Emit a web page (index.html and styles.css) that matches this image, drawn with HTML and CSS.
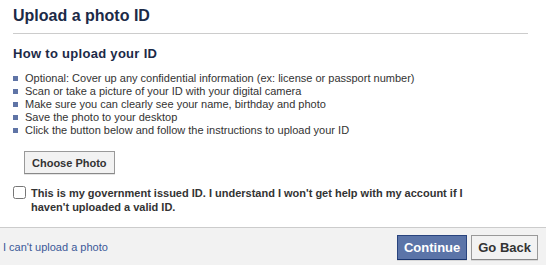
FILE: index.html
```html
<!DOCTYPE html>
<html lang="en">
<head>
    <meta charset="UTF-8">
    <title>Upload a photo ID</title>
    <link rel="stylesheet" href="styles.css">
</head>
<body>
    <div class="dialog">
        <div class="dialog-body">
            <h1 class="dialog-title">Upload a photo ID</h1>
            <h2 class="section-title">How to upload your ID</h2>
            <ul class="steps">
                <li>Optional: Cover up any confidential information (ex: license or passport number)</li>
                <li>Scan or take a picture of your ID with your digital camera</li>
                <li>Make sure you can clearly see your name, birthday and photo</li>
                <li>Save the photo to your desktop</li>
                <li>Click the button below and follow the instructions to upload your ID</li>
            </ul>
            <button type="button" class="btn choose-btn">Choose Photo</button>
            <label class="confirm">
                <input type="checkbox" class="confirm-box">
                <span>This is my government issued ID. I understand I won't get help with my account if I haven't uploaded a valid ID.</span>
            </label>
        </div>
        <!-- footer -->
        <div class="dialog-footer">
            <a href="#" class="footer-link">I can't upload a photo</a>
            <div class="footer-buttons">
                <button type="button" class="btn btn-primary">Continue</button>
                <button type="button" class="btn">Go Back</button>
            </div>
        </div>
    </div>
</body>
</html>
```

FILE: styles.css
```css
/* Global Styles */
body {
    margin: 0;
    font-family: 'Liberation Sans', sans-serif;
    font-size: 11px;
    color: #333;
    background: #fff;
}

.dialog {
    width: 546px;
    height: 265px;
    display: flex;
    flex-direction: column;
}

.dialog-body {
    flex: 1;
    padding: 0 18px 0 13px;
}

/* Headings */
.dialog-title {
    margin: 0;
    padding: 6px 0 8px;
    font-size: 16px;
    font-weight: bold;
    color: #1c2a47;
    border-bottom: 1px solid #ccc;
    line-height: 19px;
}

.section-title {
    margin: 12px 0 0;
    font-size: 13px;
    font-weight: bold;
    letter-spacing: 0.3px;
    color: #1c2a47;
    line-height: 16px;
}

/* Steps list */
.steps {
    list-style: none;
    margin: 10px 0 0;
    padding: 0;
}

.steps li {
    display: flex;
    align-items: center;
    gap: 7px;
    line-height: 13px;
}

.steps li::before {
    content: "";
    width: 5px;
    height: 5px;
    background: #5f74a6;
    flex-shrink: 0;
}

/* Buttons */
.btn {
    font-family: inherit;
    font-size: 11px;
    font-weight: bold;
    color: #333;
    background: #f2f2f2;
    border: 1px solid #999;
    border-bottom-color: #888;
    box-shadow: 0 1px 0 rgba(0, 0, 0, 0.1);
    padding: 0 7px;
    height: 23px;
    cursor: pointer;
}

.choose-btn {
    margin: 14px 0 0 11px;
}

.btn-primary {
    background: #5b74a8;
    color: #fff;
    border-color: #29447e #29447e #1a356e;
}

/* Checkbox row */
.confirm {
    display: flex;
    gap: 5px;
    margin-top: 12px;
    padding-right: 28px;
    font-weight: bold;
    color: #333;
    line-height: 14px;
}

.confirm-box {
    margin: 0;
    width: 13px;
    height: 13px;
    flex-shrink: 0;
}

/* Footer */
.dialog-footer {
    height: 37px;
    background: #f2f2f2;
    border-top: 1px solid #ccc;
    display: flex;
    align-items: center;
    justify-content: space-between;
    padding: 0 8px 0 3px;
}

.footer-link {
    color: #3b5998;
    text-decoration: none;
}

.footer-buttons {
    display: flex;
    gap: 4px;
    margin-top: 2px;
}

.footer-buttons .btn {
    height: 25px;
    font-size: 13px;
    padding: 0 6px;
}
```
